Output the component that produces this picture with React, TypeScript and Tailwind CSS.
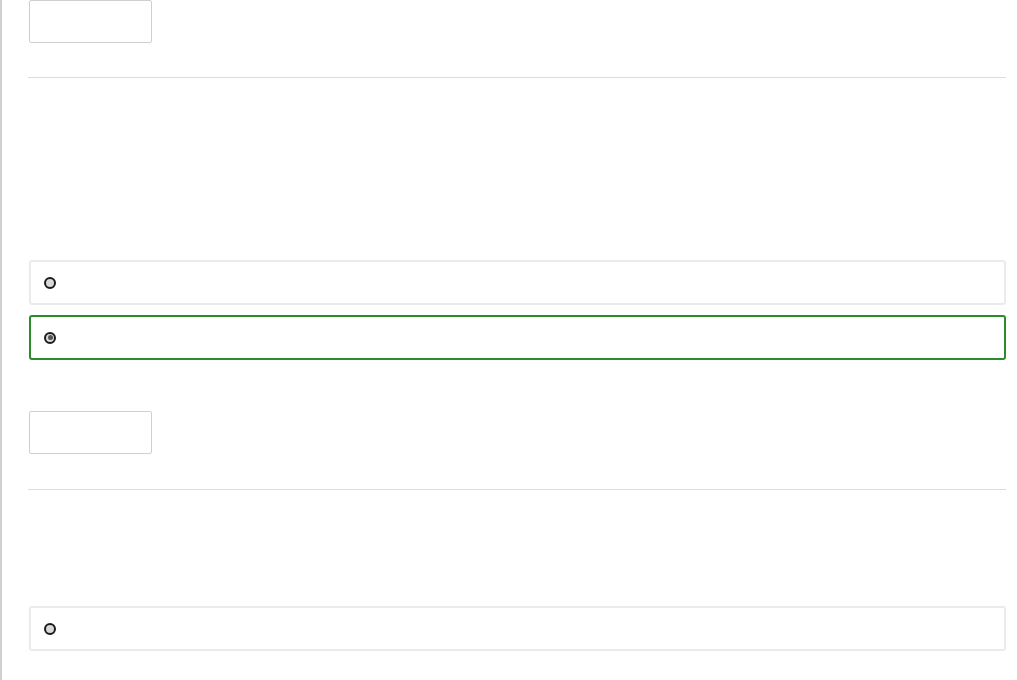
import React from "react";

function Radio({ checked }: { checked?: boolean }) {
  return (
    <span className="flex h-[12px] w-[12px] items-center justify-center rounded-full border-2 border-[#1a1a1a] bg-[#d8d8d8]">
      {checked && <span className="h-[5px] w-[5px] rounded-full bg-[#555]" />}
    </span>
  );
}

function Card({ checked }: { checked?: boolean }) {
  return (
    <div
      className={
        "flex h-[45px] items-center rounded-[3px] border-2 pl-[13px] " +
        (checked ? "border-[#2c8c2c]" : "border-[#ebebeb]")
      }
    >
      <Radio checked={checked} />
    </div>
  );
}

function Box() {
  return <div className="h-[43px] w-[123px] rounded-[2px] border border-[#cfcfcf] bg-white" />;
}

export default function App() {
  return (
    <div className="h-[680px] overflow-hidden bg-white font-['Liberation_Sans',sans-serif]">
      <div className="h-full border-l-2 border-[#d0d0d0] pl-[27px] pr-[11px]">
        <Box />
        <div className="-ml-px mt-[34px] h-px bg-[#dcdcdc]" />
        <div className="mt-[182px]">
          <Card />
        </div>
        <div className="mt-[10px]">
          <Card checked />
        </div>
        <div className="mt-[51px]">
          <Box />
        </div>
        <div className="-ml-px mt-[35px] h-px bg-[#dcdcdc]" />
        <div className="mt-[116px]">
          <Card />
        </div>
      </div>
    </div>
  );
}
